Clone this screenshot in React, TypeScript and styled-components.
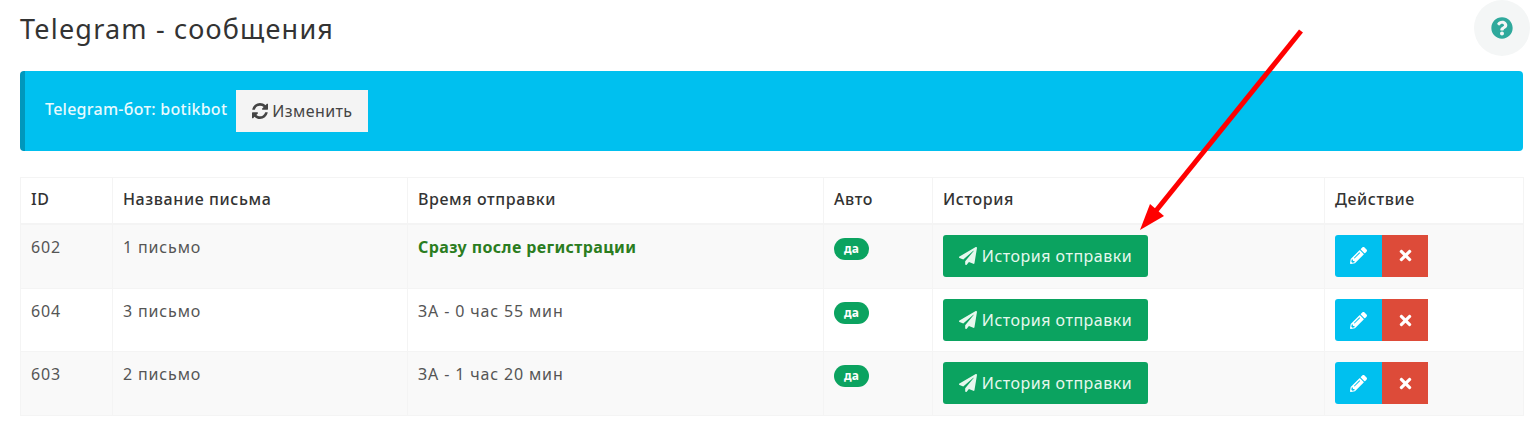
import React from "react";
import styled, { createGlobalStyle } from "styled-components";
import { FaPaperPlane, FaPencilAlt, FaTimes, FaQuestionCircle } from "react-icons/fa";

const GlobalStyle = createGlobalStyle`
  html, body {
    margin: 0;
    padding: 0;
    background: #fff;
    font-family: "Noto Sans", "Open Sans", sans-serif;
    color: #333;
  }
`;

const Page = styled.div`
  position: relative;
  width: 1540px;
  height: 433px;
  overflow: hidden;
  box-sizing: border-box;
  padding: 9px 17px 0 20px;
`;

const Title = styled.h1`
  margin: 0 0 23px;
  height: 39px;
  font-size: 27px;
  line-height: 39px;
  font-weight: 400;
  letter-spacing: 1.2px;
  color: #333;
`;

const HelpButton = styled.div`
  position: absolute;
  top: 0;
  right: 10px;
  width: 56px;
  height: 56px;
  border-radius: 50%;
  background: #f4f6f6;
  display: flex;
  align-items: center;
  justify-content: center;
  font-size: 22px;
  color: #2fa99c;
`;

const Alert = styled.div`
  display: flex;
  align-items: center;
  gap: 9px;
  height: 80px;
  box-sizing: border-box;
  margin-bottom: 26px;
  padding: 0 0 0 20px;
  background: #00c0ef;
  border-left: 5px solid #0097bc;
  border-radius: 4px;
  color: #e8fafe;
  font-size: 16px;
  letter-spacing: 0.26px;
  font-weight: 500;
`;

const BotName = styled.span`
  position: relative;
  top: -2px;
`;

const ChangeButton = styled.button`
  display: inline-flex;
  align-items: center;
  gap: 4px;
  height: 42px;
  width: 132px;
  padding: 0 0 0 16px;
  border: 0;
  background: #f4f4f4;
  color: #444;
  font-family: inherit;
  font-size: 16px;
  letter-spacing: 0.4px;
`;

const RefreshIcon = styled.svg`
  width: 16px;
  height: 16px;
  fill: #444;
`;

const Table = styled.table`
  width: 1503px;
  table-layout: fixed;
  border-collapse: collapse;
  border: 1px solid #f4f4f4;
  font-size: 16px;
  letter-spacing: 0.85px;
  color: #555;
`;

const HeadCell = styled.th<{ $width: number }>`
  width: ${(p) => p.$width}px;
  height: 46px;
  box-sizing: border-box;
  padding: 0 10px 3px;
  border-left: 1px solid #f4f4f4;
  border-bottom: 2px solid #f4f4f4;
  text-align: left;
  font-weight: 500;
  letter-spacing: 0.6px;
  color: #333;
`;

const Row = styled.tr<{ $striped: boolean; $height: number }>`
  height: ${(p) => p.$height}px;
  background: ${(p) => (p.$striped ? "#f9f9f9" : "#fff")};
`;

const Cell = styled.td`
  box-sizing: border-box;
  padding: 11px 10px 0;
  border-left: 1px solid #f4f4f4;
  border-bottom: 1px solid #f4f4f4;
  vertical-align: top;
  line-height: 22px;
`;

const AutoSend = styled.span`
  color: #2b7d1f;
  font-weight: 700;
  letter-spacing: 0.38px;
`;

const Badge = styled.span`
  display: inline-block;
  height: 22px;
  width: 35px;
  text-align: center;
  border-radius: 11px;
  background: #0ba360;
  color: #fff;
  font-size: 12px;
  font-weight: 700;
  letter-spacing: 0;
  line-height: 21px;
`;

const HistoryButton = styled.button`
  display: inline-flex;
  align-items: center;
  justify-content: center;
  gap: 5px;
  width: 205px;
  height: 42px;
  margin-top: -1px;
  border: 0;
  border-radius: 3px;
  background: #0ba360;
  color: #e6f8ee;
  font-family: inherit;
  font-size: 16px;
  letter-spacing: 0.5px;
  svg {
    font-size: 18px;
  }
`;

const ActionGroup = styled.div`
  display: flex;
  margin-top: -1px;
`;

const ActionButton = styled.button<{ $color: string; $left?: boolean }>`
  display: flex;
  align-items: center;
  justify-content: center;
  width: ${(p) => (p.$left ? 47 : 46)}px;
  height: 42px;
  padding: 0;
  border: 0;
  border-radius: ${(p) => (p.$left ? "3px 0 0 3px" : "0")};
  background: ${(p) => p.$color};
  color: #fff;
  font-size: 17px;
`;

const Arrow = styled.svg`
  position: absolute;
  top: 0;
  left: 0;
  pointer-events: none;
`;

const columns = [
  { title: "ID", width: 92 },
  { title: "Название письма", width: 295 },
  { title: "Время отправки", width: 416 },
  { title: "Авто", width: 109 },
  { title: "История", width: 392 },
  { title: "Действие", width: 199 },
];

const letters = [
  { id: 602, name: "1 письмо", time: "Сразу после регистрации", auto: true, height: 65 },
  { id: 604, name: "3 письмо", time: "ЗА - 0 час 55 мин", auto: false, height: 63 },
  { id: 603, name: "2 письмо", time: "ЗА - 1 час 20 мин", auto: false, height: 64 },
];

export default function App() {
  return (
    <Page>
      <GlobalStyle />
      <Title>Telegram - сообщения</Title>
      <HelpButton>
        <FaQuestionCircle />
      </HelpButton>
      <Alert>
        <BotName>Telegram-бот: botikbot</BotName>
        <ChangeButton type="button">
          <RefreshIcon viewBox="0 0 1536 1536">
            <path d="M1511 928q0 5-1 7-64 268-268 434.5t-478 166.5q-146 0-282.5-55t-243.5-157l-129 129q-19 19-45 19t-45-19-19-45v-448q0-26 19-45t45-19h448q26 0 45 19t19 45-19 45l-137 137q71 66 161 102t187 36q134 0 250-65t186-179q11-17 53-117 8-23 30-23h192q13 0 22.5 9.5t9.5 22.5zm25-800v448q0 26-19 45t-45 19h-448q-26 0-45-19t-19-45 19-45l138-138q-148-137-349-137-134 0-250 65t-186 179q-11 17-53 117-8 23-30 23h-199q-13 0-22.5-9.5t-9.5-22.5v-7q65-268 270-434.5t480-166.5q146 0 284 55.5t245 156.5l130-129q19-19 45-19t45 19 19 45z" />
          </RefreshIcon>
          Изменить
        </ChangeButton>
      </Alert>
      <Table>
        <thead>
          <tr>
            {columns.map((col) => (
              <HeadCell key={col.title} $width={col.width}>
                {col.title}
              </HeadCell>
            ))}
          </tr>
        </thead>
        <tbody>
          {letters.map((letter, i) => (
            <Row key={letter.id} $striped={i % 2 === 0} $height={letter.height}>
              <Cell>{letter.id}</Cell>
              <Cell>{letter.name}</Cell>
              <Cell>{letter.auto ? <AutoSend>{letter.time}</AutoSend> : letter.time}</Cell>
              <Cell>
                <Badge>да</Badge>
              </Cell>
              <Cell>
                <HistoryButton type="button">
                  <FaPaperPlane />
                  История отправки
                </HistoryButton>
              </Cell>
              <Cell>
                <ActionGroup>
                  <ActionButton type="button" $color="#00c0ef" $left>
                    <FaPencilAlt />
                  </ActionButton>
                  <ActionButton type="button" $color="#dd4b39">
                    <FaTimes />
                  </ActionButton>
                </ActionGroup>
              </Cell>
            </Row>
          ))}
        </tbody>
      </Table>
      <Arrow width="1540" height="433" viewBox="0 0 1540 433">
        <line x1="1301" y1="31" x2="1155" y2="212" stroke="#ff0000" strokeWidth="5" />
        <polygon points="1140,230 1150,204 1164,216" fill="#ff0000" />
      </Arrow>
    </Page>
  );
}
